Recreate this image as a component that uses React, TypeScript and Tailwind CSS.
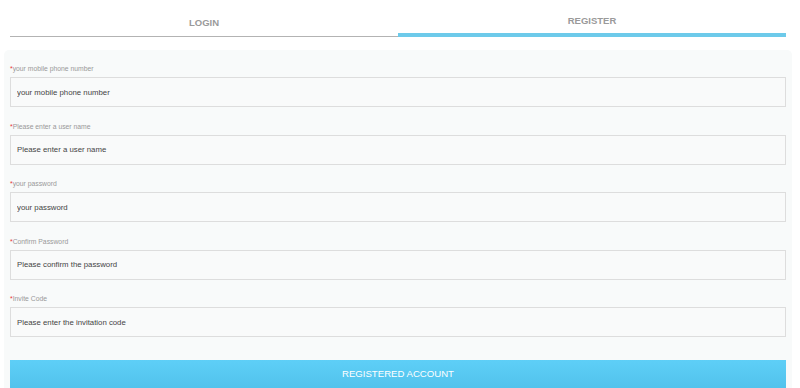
const fields = [
  { label: "your mobile phone number", placeholder: "your mobile phone number" },
  { label: "Please enter a user name", placeholder: "Please enter a user name" },
  { label: "your password", placeholder: "your password" },
  { label: "Confirm Password", placeholder: "Please confirm the password" },
  { label: "Invite Code", placeholder: "Please enter the invitation code" },
];

const font = "font-['Liberation_Sans',Arial,sans-serif]";

export default function App() {
  return (
    <div className={`w-[800px] h-[388px] overflow-hidden bg-white ${font}`}>
      <div className="ml-[10px] mr-[14px] flex h-[37px]">
        <div className="flex-1 border-b border-[#b3b3b3] pt-[18px] text-center text-[9.5px] leading-[10px] font-bold text-[#9a9a9a]">
          LOGIN
        </div>
        <div className="flex-1 border-b-[4px] border-[#6dcaea] pt-[16px] text-center text-[9.5px] leading-[10px] font-bold text-[#9a9a9a]">
          REGISTER
        </div>
      </div>

      <div className="ml-[4px] mr-[8px] mt-[13px] flex flex-col rounded-[5px] bg-[#f8fafa] px-[6px] pt-[14px] pb-[40px]">
        {fields.map((f) => (
          <div key={f.label} className="mb-[14.5px]">
            <div className="h-[9px] text-[6.8px] leading-[9px] text-[#999]">
              <span className="text-[#e53935]">*</span>
              {f.label}
            </div>
            <input
              type="text"
              placeholder={f.placeholder}
              className={`mt-[4px] block h-[30px] w-full border border-[#dddddd] bg-[#f9fafa] px-[6px] text-[7.8px] text-[#444] outline-none placeholder:text-[#444] ${font}`}
            />
          </div>
        ))}

        <button
          type="button"
          className={`mt-[8.5px] block h-[36px] w-full bg-gradient-to-b from-[#5ecff7] to-[#4dbfe9] pb-[8px] text-center text-[9.6px] leading-[28px] text-white ${font}`}
        >
          REGISTERED ACCOUNT
        </button>
      </div>
    </div>
  );
}
